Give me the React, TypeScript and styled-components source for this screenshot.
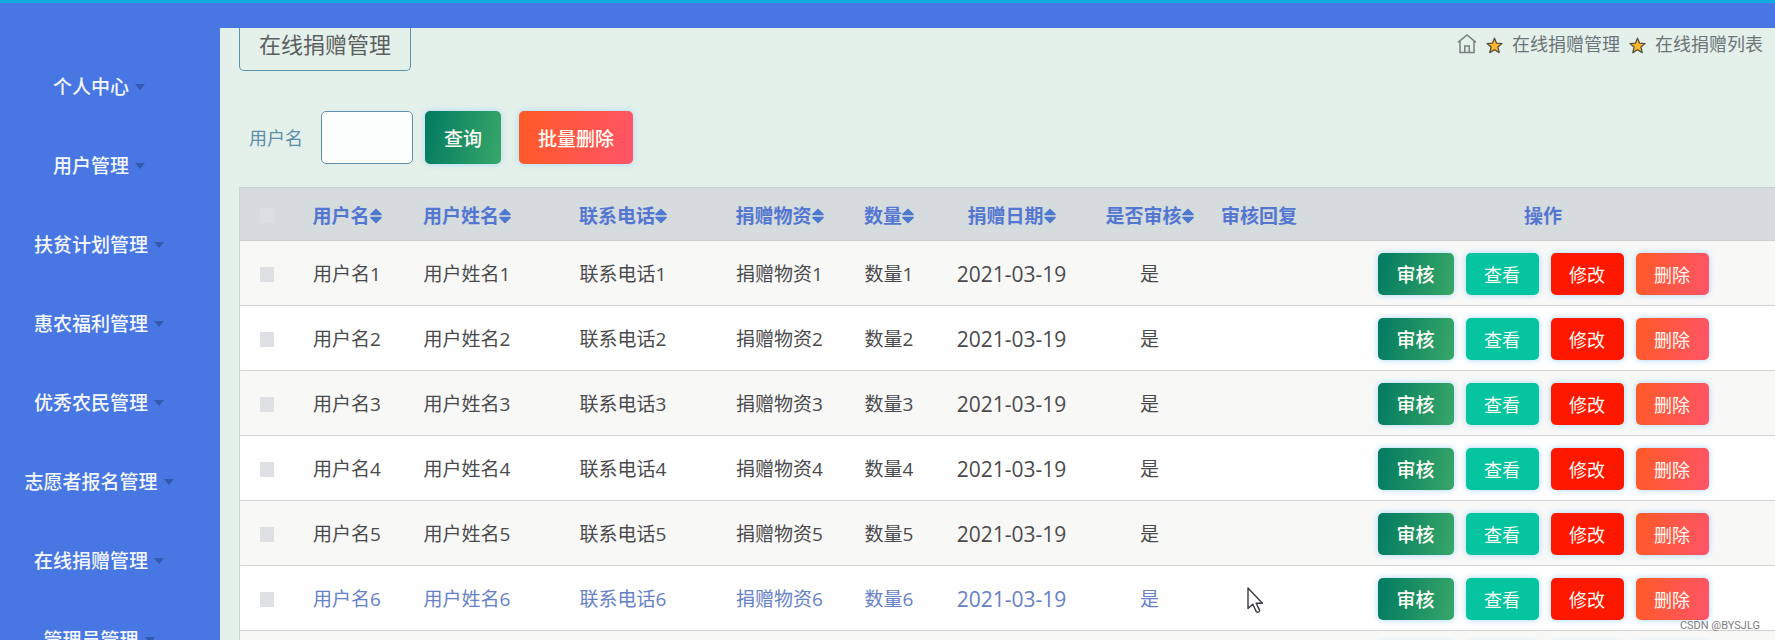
import React from "react";
import styled, { createGlobalStyle, css } from "styled-components";

const GlobalStyle = createGlobalStyle`
  * { box-sizing: border-box; }
  body {
    margin: 0;
    overflow: hidden;
    font-family: "Open Sans", "Noto Sans CJK SC", sans-serif;
    background: #e4f0ea;
  }
  button, input { font-family: inherit; }
`;

const Page = styled.div`
  position: relative;
  display: flex;
  flex-direction: column;
  height: 100vh;
  overflow: hidden;
`;

const TopBar = styled.header`
  flex: none;
  height: 28px;
  background: #4876e3;
  border-top: 3px solid #0cabe2;
`;

const Body = styled.div`
  flex: 1;
  display: flex;
  min-height: 0;
`;

const Sidebar = styled.nav`
  flex: none;
  width: 220px;
  padding-top: 19px;
  overflow: hidden;
  background: #4876e3;
`;

const Menu = styled.ul`
  margin: 0;
  padding: 0;
  list-style: none;
`;

const MenuLink = styled.a`
  display: flex;
  align-items: center;
  justify-content: center;
  gap: 6px;
  height: 79px;
  padding-right: 22px;
  color: #f4f8ff;
  font-size: 19px;
  font-weight: 500;
  line-height: 28px;
  white-space: nowrap;
  text-decoration: none;
`;

const Caret = styled.span`
  border: 5px solid transparent;
  border-top: 6px solid #3159ae;
  border-bottom: 0;
`;

const Main = styled.main`
  flex: 1;
  min-width: 0;
  overflow: hidden;
  padding-left: 19px;
`;

const TitleRow = styled.div`
  display: flex;
  align-items: flex-start;
  justify-content: space-between;
  padding-right: 12px;
`;

const Title = styled.h1`
  margin: 0;
  height: 43px;
  padding: 0 19px;
  border: 1px solid #5f92ab;
  border-top: 0;
  border-radius: 0 0 5px 5px;
  color: #5c5f60;
  font-size: 22px;
  font-weight: 400;
  line-height: 32px;
`;

const Crumbs = styled.nav`
  display: flex;
  align-items: center;
  gap: 9px;
  color: #6c7578;
  font-size: 18px;
  line-height: 32px;
`;

const CrumbLink = styled.a`
  display: flex;
  color: inherit;
  text-decoration: none;
`;

const SearchForm = styled.form`
  display: flex;
  align-items: center;
  padding: 40px 0 23px 10px;
`;

const SearchLabel = styled.label`
  margin-right: 18px;
  color: #5e8ea9;
  font-size: 18px;
  line-height: 28px;
`;

const SearchInput = styled.input`
  width: 92px;
  height: 53px;
  margin-right: 12px;
  padding: 0 10px;
  border: 1px solid #5f8fab;
  border-radius: 5px;
  background: #fbfefc;
  font-size: 18px;
`;

const FormActions = styled.div`
  display: flex;
  gap: 18px;
`;

type Tone = "green" | "mint" | "red" | "coral";

const tones: Record<Tone, string> = {
  green: "linear-gradient(100deg, #017a60, #38a769)",
  mint: "#04c59f",
  red: "#ff1800",
  coral: "linear-gradient(100deg, #ff5a26, #ff5468)",
};

const Button = styled.button<{ $tone: Tone; $large?: boolean; $wide?: boolean }>`
  border: 0;
  border-radius: 5px;
  background: ${(p) => tones[p.$tone]};
  box-shadow: 0 0 6px #a9d8f4;
  color: #fffdf6;
  font-weight: ${(p) => (p.$large || p.$wide ? 500 : 400)};
  line-height: 28px;
  ${(p) =>
    p.$large
      ? css`
          height: 53px;
          padding: 2px 19px 0;
          font-size: 19px;
        `
      : css`
          width: ${p.$wide ? 76 : 73}px;
          height: 42px;
          padding: 2px 0 0;
          font-size: ${p.$wide ? 19 : 18}px;
        `}
`;

const Table = styled.table`
  width: 100%;
  table-layout: fixed;
  border-collapse: separate;
  border-spacing: 0;
  border-left: 1px solid #cdd1d1;
  color: #4a4a4c;
  font-size: 19px;
  line-height: 28px;
  text-align: center;
`;

const Col = styled.col<{ $w?: number }>`
  width: ${(p) => (p.$w ? `${p.$w}px` : "auto")};
`;

const HeadCell = styled.th`
  height: 54px;
  padding: 3px 0 0;
  border-top: 1px solid #c8cdcd;
  border-bottom: 1px solid #ccd0d1;
  background: #d6dbde;
  color: #5377d0;
  font-weight: 700;
  white-space: nowrap;
`;

const HeadLabel = styled.span`
  display: inline-flex;
  align-items: center;
`;

const Row = styled.tr<{ $active?: boolean }>`
  background: #fefefe;
  &:nth-child(odd) { background: #f8f8f7; }
  ${(p) => p.$active && "color: #6681c6;"}
`;

const Cell = styled.td`
  height: 65px;
  padding: 2px 0 0;
  border-bottom: 1px solid #d2d2d2;
  white-space: nowrap;
`;

const DateCell = styled(Cell)`
  font-size: 21px;
`;

const Check = styled.input<{ $faint?: boolean }>`
  appearance: none;
  display: block;
  width: 14px;
  height: 15px;
  margin: 0 auto;
  background: ${(p) => (p.$faint ? "#dbdfe3" : "#dee0e3")};
`;

const Actions = styled.div`
  display: flex;
  justify-content: center;
  gap: 12px;
`;

const Pointer = styled.svg`
  position: absolute;
  left: 1246px;
  top: 586px;
  pointer-events: none;
`;

const Watermark = styled.span`
  position: absolute;
  right: 15px;
  bottom: 5px;
  color: #7d7d7d;
  font: 11px/18px Roboto, sans-serif;
  text-shadow: 0 0 1px #ffffff;
`;

const SortIcon = () => (
  <svg width="12" height="16" viewBox="0 0 12 16" fill="#4f78cf" aria-hidden="true">
    <path d="M6 0.4 11.7 6Q12.2 7.2 11 7.2H1Q-0.2 7.2 0.3 6ZM6 15.6 11.7 10Q12.2 8.8 11 8.8H1Q-0.2 8.8 0.3 10Z" />
  </svg>
);

const HomeIcon = () => (
  <svg width="20" height="20" viewBox="0 0 20 20" fill="none" stroke="#77807f" strokeWidth="1.5" aria-hidden="true">
    <path d="M1 8.4 10 1 19 8.4M3 7V18.4H17V7M7.8 18.4V12H12.2V18.4" />
  </svg>
);

const StarIcon = () => (
  <svg width="17" height="19" viewBox="0 0 17 19" aria-hidden="true">
    <path
      d="M8.5 3.2 10.6 8.2 16 8.6 11.9 12.1 13.2 17.6 8.5 14.7 3.8 17.6 5.1 12.1 1 8.6 6.4 8.2Z"
      fill="#fdb62f"
      stroke="#57503c"
      strokeWidth="1.3"
      strokeLinejoin="round"
    />
  </svg>
);

const menuItems = [
  "个人中心",
  "用户管理",
  "扶贫计划管理",
  "惠农福利管理",
  "优秀农民管理",
  "志愿者报名管理",
  "在线捐赠管理",
  "管理员管理",
];

const columns = [
  { label: "用户名", width: 106, sortable: true },
  { label: "用户姓名", width: 134, sortable: true },
  { label: "联系电话", width: 178, sortable: true },
  { label: "捐赠物资", width: 135, sortable: true },
  { label: "数量", width: 84, sortable: true },
  { label: "捐赠日期", width: 161, sortable: true },
  { label: "是否审核", width: 115, sortable: true },
  { label: "审核回复", width: 104, sortable: false },
  { label: "操作", width: undefined, sortable: false },
];

const records = [1, 2, 3, 4, 5, 6, 7];

export default function App() {
  return (
    <Page>
      <GlobalStyle />
      <TopBar />
      <Body>
        <Sidebar>
          <Menu>
            {menuItems.map((item) => (
              <li key={item}>
                <MenuLink href="#">
                  {item}
                  <Caret />
                </MenuLink>
              </li>
            ))}
          </Menu>
        </Sidebar>
        <Main>
          <TitleRow>
            <Title>在线捐赠管理</Title>
            <Crumbs>
              <CrumbLink href="#" aria-label="首页">
                <HomeIcon />
              </CrumbLink>
              <StarIcon />
              <CrumbLink href="#">在线捐赠管理</CrumbLink>
              <StarIcon />
              <span>在线捐赠列表</span>
            </Crumbs>
          </TitleRow>
          <SearchForm onSubmit={(e) => e.preventDefault()}>
            <SearchLabel htmlFor="username">用户名</SearchLabel>
            <SearchInput id="username" type="text" />
            <FormActions>
              <Button $tone="green" $large type="submit">
                查询
              </Button>
              <Button $tone="coral" $large type="button">
                批量删除
              </Button>
            </FormActions>
          </SearchForm>
          <Table>
            <colgroup>
              <Col $w={54} />
              {columns.map((c) => (
                <Col key={c.label} $w={c.width} />
              ))}
            </colgroup>
            <thead>
              <tr>
                <HeadCell>
                  <Check $faint type="checkbox" aria-label="全选" />
                </HeadCell>
                {columns.map((c) => (
                  <HeadCell key={c.label}>
                    <HeadLabel>
                      {c.label}
                      {c.sortable && <SortIcon />}
                    </HeadLabel>
                  </HeadCell>
                ))}
              </tr>
            </thead>
            <tbody>
              {records.map((n) => (
                <Row key={n} $active={n === 6}>
                  <Cell>
                    <Check type="checkbox" aria-label={`选择用户名${n}`} />
                  </Cell>
                  <Cell>用户名{n}</Cell>
                  <Cell>用户姓名{n}</Cell>
                  <Cell>联系电话{n}</Cell>
                  <Cell>捐赠物资{n}</Cell>
                  <Cell>数量{n}</Cell>
                  <DateCell>2021-03-19</DateCell>
                  <Cell>是</Cell>
                  <Cell />
                  <Cell>
                    <Actions>
                      <Button $tone="green" $wide type="button">审核</Button>
                      <Button $tone="mint" type="button">查看</Button>
                      <Button $tone="red" type="button">修改</Button>
                      <Button $tone="coral" type="button">删除</Button>
                    </Actions>
                  </Cell>
                </Row>
              ))}
            </tbody>
          </Table>
        </Main>
      </Body>
      <Pointer width="20" height="30" viewBox="0 0 20 30" aria-hidden="true">
        <path
          d="M2 2V22.5L6.8 18.2 10.2 25.4Q11.6 26.8 13 25.8 13.9 24.8 13.2 23.4L10.2 17.2H16.4Z"
          fill="#ffffff"
          stroke="#3a3a40"
          strokeWidth="1.4"
          strokeLinejoin="round"
        />
      </Pointer>
      <Watermark>CSDN @BYSJLG</Watermark>
    </Page>
  );
}
